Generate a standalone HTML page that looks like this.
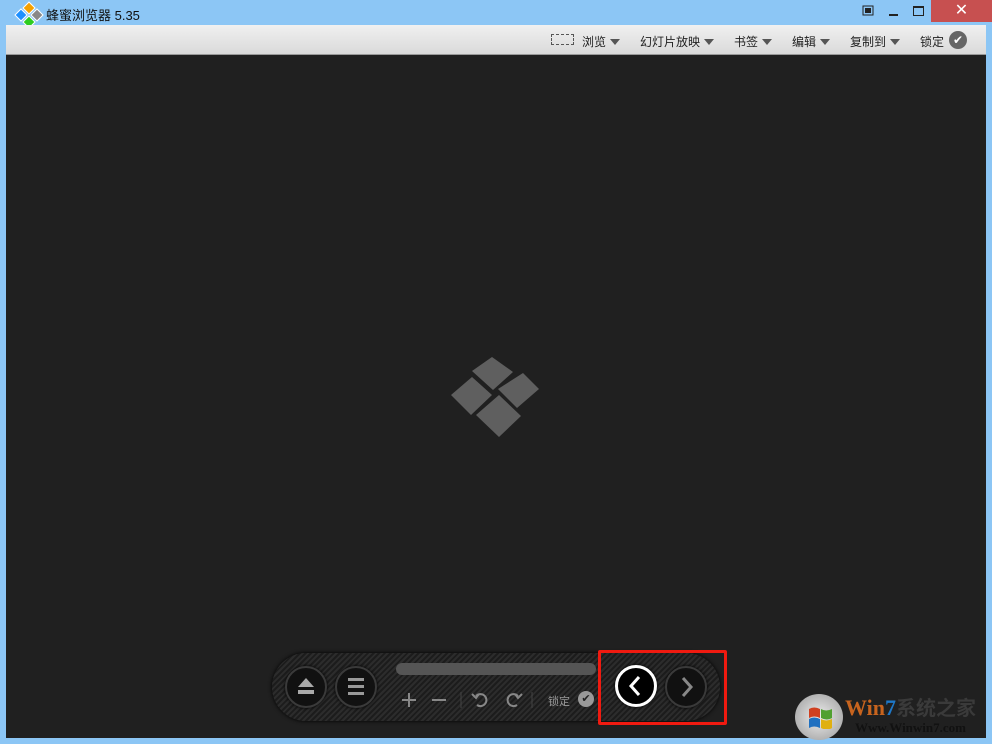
<!DOCTYPE html>
<html><head><meta charset="utf-8"><style>
*{margin:0;padding:0;box-sizing:border-box}
body{width:992px;height:744px;background:#8cc6f5;position:relative;overflow:hidden;font-family:"Liberation Sans","Noto Sans CJK SC",sans-serif}
.title{position:absolute;left:46px;top:5px;font-size:13px;color:#111}
.tb{position:absolute;left:6px;top:25px;width:980px;height:30px;background:linear-gradient(#f0f0f0,#dadada);border-bottom:1px solid #999}
.tb span{position:absolute;top:8px;font-size:12px;color:#222}
.tri{display:inline-block;width:0;height:0;border-left:5px solid transparent;border-right:5px solid transparent;border-top:6px solid #555;margin-left:4px;vertical-align:1px}
.main{position:absolute;left:6px;top:55px;width:980px;height:683px;background:#202020}
.close{position:absolute;left:931px;top:0;width:61px;height:22px;background:#c75050;color:#fff;text-align:center;font-size:16px;line-height:22px}
.pill{position:absolute;left:272px;top:653px;width:448px;height:68px;border-radius:34px;background:repeating-linear-gradient(-45deg,#1c1c1c 0 2px,#2c2c2c 2px 4px);box-shadow:0 0 4px #000}
.btn{position:absolute;width:42px;height:42px;border-radius:50%;background:#111;border:2px solid #3a3a3a;box-shadow:0 0 3px #000}
</style></head><body>
<svg style="position:absolute;left:12px;top:0" width="34" height="30" viewBox="0 0 34 30">
<polygon points="17,2 23,8 17,14 11,8" fill="#f5a000" stroke="#fff"/>
<polygon points="9,9 15,15 9,21 3,15" fill="#1e90ff" stroke="#fff"/>
<polygon points="25,9 31,15 25,21 19,15" fill="#888" stroke="#fff"/>
<polygon points="17,16 23,22 17,28 11,22" fill="#2ecc20" stroke="#fff"/>
</svg>
<div class="title">蜂蜜浏览器 5.35</div>
<svg style="position:absolute;left:862px;top:5px" width="12" height="11"><rect x="1" y="1" width="10" height="9" fill="none" stroke="#222"/><rect x="3" y="3" width="6" height="5" fill="#222"/></svg>
<div style="position:absolute;left:889px;top:14px;width:9px;height:2px;background:#222"></div>
<div style="position:absolute;left:913px;top:6px;width:11px;height:10px;border:1px solid #222;border-top-width:2px"></div>
<div class="close">✕</div>
<div class="tb">
<div style="position:absolute;left:545px;top:9px;width:23px;height:11px;border:1px dashed #555"></div>
<span style="left:576px">浏览<i class="tri"></i></span>
<span style="left:634px">幻灯片放映<i class="tri"></i></span>
<span style="left:728px">书签<i class="tri"></i></span>
<span style="left:786px">编辑<i class="tri"></i></span>
<span style="left:844px">复制到<i class="tri"></i></span>
<span style="left:914px">锁定</span>
<div style="position:absolute;left:943px;top:6px;width:18px;height:18px;border-radius:50%;background:#666;color:#fff;font-size:12px;text-align:center;line-height:18px">✔</div>
</div>
<div class="main"></div>
<svg style="position:absolute;left:0;top:0" width="992" height="744">
<g fill="#5f5f5f">
<polygon points="492,357 513,372 493,390 472,371"/>
<polygon points="523,373 539,389 517,408 498,389"/>
<polygon points="472,377 492,395 471,415 451,395"/>
<polygon points="499,395 521,416 499,437 476,415"/>
</g></svg>
<div class="pill"></div>
<div style="position:absolute;left:396px;top:663px;width:200px;height:12px;border-radius:6px;background:#555"></div>
<div class="btn" style="left:285px;top:666px"><svg width="38" height="38"><polygon points="19,10 27,19 11,19" fill="#aaa"/><rect x="11" y="22" width="16" height="4" fill="#aaa"/></svg></div>
<div class="btn" style="left:335px;top:666px"><svg width="38" height="38"><rect x="11" y="10" width="16" height="3" fill="#999"/><rect x="11" y="17" width="16" height="3" fill="#999"/><rect x="11" y="24" width="16" height="3" fill="#999"/></svg></div>
<svg style="position:absolute;left:398px;top:690px" width="200" height="22" fill="none" stroke="#888" stroke-width="2">
<path d="M11 3v14M4 10h14"/><path d="M34 10h14"/><path d="M63 2v16" stroke="#444" stroke-width="1"/>
<path d="M78 6a6 6 0 1 1 1 9" /><path d="M74 4l4 4 3-4"/>
<path d="M120 6a6 6 0 1 0 -1 9"/><path d="M124 4l-4 4-3-4"/>
<path d="M134 2v16" stroke="#444" stroke-width="1"/></svg>
<div style="position:absolute;left:548px;top:693px;font-size:11px;color:#999">锁定</div>
<div style="position:absolute;left:578px;top:691px;width:16px;height:16px;border-radius:50%;background:#999;color:#222;font-size:11px;text-align:center;line-height:16px">✔</div>
<div class="btn" style="left:615px;top:665px;background:#000;border:3px solid #fff"><svg width="36" height="36"><path d="M21 9l-8 9 8 9" fill="none" stroke="#fff" stroke-width="3"/></svg></div>
<div class="btn" style="left:665px;top:666px"><svg width="38" height="38"><path d="M16 10l8 9-8 9" fill="none" stroke="#888" stroke-width="3"/></svg></div>
<div style="position:absolute;left:598px;top:650px;width:129px;height:75px;border:3px solid #f01a10;border-radius:2px"></div>
<div style="position:absolute;left:795px;top:694px;width:48px;height:46px;border-radius:50%;background:radial-gradient(#eee,#999)"></div>
<svg style="position:absolute;left:807px;top:705px" width="26" height="24"><path d="M2 4q5-3 11 0v9q-6-3-11 0z" fill="#d04020"/><path d="M14 4q5 3 11 0v9q-5 3-11 0z" fill="#50a030"/><path d="M2 14q5-3 11 0v9q-6-3-11 0z" fill="#2070c0"/><path d="M14 14q5 3 11 0v9q-5 3-11 0z" fill="#e0b010"/></svg>
<div style="position:absolute;left:845px;top:694px;font:bold 22px 'Liberation Serif',serif;color:#c8641e;line-height:26px">Win<span style="color:#1e78c8">7</span><span style="color:#3a3a3a;font-family:'Noto Sans CJK SC';font-size:20px">系统之家</span></div>
<div style="position:absolute;left:855px;top:720px;font:bold 13px 'Liberation Serif',serif;color:#111">Www.Winwin7.com</div>
</body></html>
